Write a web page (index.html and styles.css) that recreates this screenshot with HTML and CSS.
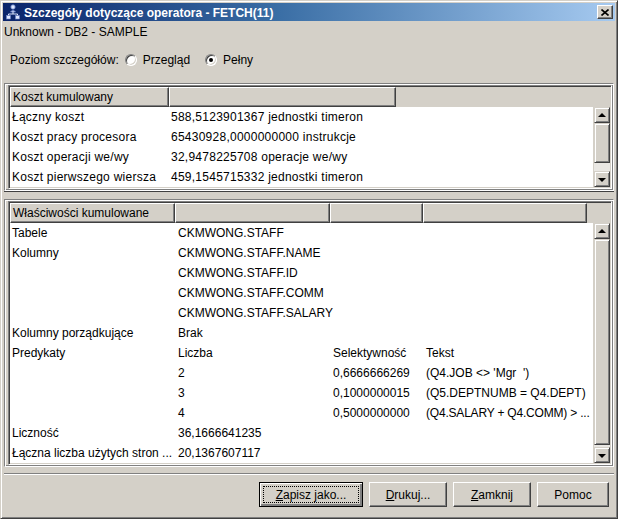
FILE: index.html
```html
<!DOCTYPE html>
<html>
<head>
<meta charset="utf-8">
<link rel="stylesheet" href="styles.css">
</head>
<body>
<div class="window">
  <div class="titlebar">
    <svg class="appicon" width="16" height="16" viewBox="0 0 16 16">
      <circle cx="8" cy="3" r="2.2" fill="#dfe8ff" stroke="#6b83c8" stroke-width="0.8"/>
      <path d="M5.5 8 Q8 4.5 10.5 8 Z" fill="#dfe8ff" stroke="#6b83c8" stroke-width="0.8"/>
      <path d="M8 8 V10 M3.5 10 H12.5 M3.5 10 V11.5 M12.5 10 V11.5" stroke="#dfe8ff" stroke-width="1" fill="none"/>
      <rect x="1.5" y="11.5" width="4" height="3.5" fill="#dfe8ff" stroke="#6b83c8" stroke-width="0.6"/>
      <rect x="10.5" y="11.5" width="4" height="3.5" fill="#dfe8ff" stroke="#6b83c8" stroke-width="0.6"/>
    </svg>
    <span class="title">Szczegóły dotyczące operatora - FETCH(11)</span>
    <div class="close">
      <svg width="8" height="7" viewBox="0 0 8 7"><path d="M0.5 0.5 L7.5 6.5 M7.5 0.5 L0.5 6.5" stroke="#000" stroke-width="1.6" fill="none"/></svg>
    </div>
  </div>

  <div class="conn">Unknown - DB2 - SAMPLE</div>

  <div class="level">
    <span class="level-label">Poziom szczegółów:</span>
    <span class="rb"></span><span class="rb-text">Przegląd</span>
    <span class="rb checked"></span><span class="rb-text">Pełny</span>
  </div>

  <div class="panel upper">
    <div class="scrollpane">
      <div class="thead cols-up">
        <div class="th">Koszt kumulowany</div>
        <div class="th"></div>
      </div>
      <div class="tbody">
        <div class="tr cols-up"><span>Łączny koszt</span><span>588,5123901367 jednostki timeron</span></div>
        <div class="tr cols-up"><span>Koszt pracy procesora</span><span>65430928,0000000000 instrukcje</span></div>
        <div class="tr cols-up"><span>Koszt operacji we/wy</span><span>32,9478225708 operacje we/wy</span></div>
        <div class="tr cols-up"><span>Koszt pierwszego wiersza</span><span>459,1545715332 jednostki timeron</span></div>
      </div>
      <div class="vscroll">
        <div class="sbtn"><span class="arr-up"></span></div>
        <div class="thumb short"></div>
        <div class="track"></div>
        <div class="sbtn"><span class="arr-down"></span></div>
      </div>
    </div>
  </div>

  <div class="splitter"></div>

  <div class="panel lower">
    <div class="scrollpane">
      <div class="thead cols-low">
        <div class="th">Właściwości kumulowane</div>
        <div class="th"></div>
        <div class="th"></div>
        <div class="th"></div>
      </div>
      <div class="tbody">
        <div class="tr cols-low"><span>Tabele</span><span>CKMWONG.STAFF</span><span></span><span></span></div>
        <div class="tr cols-low"><span>Kolumny</span><span>CKMWONG.STAFF.NAME</span><span></span><span></span></div>
        <div class="tr cols-low"><span></span><span>CKMWONG.STAFF.ID</span><span></span><span></span></div>
        <div class="tr cols-low"><span></span><span>CKMWONG.STAFF.COMM</span><span></span><span></span></div>
        <div class="tr cols-low"><span></span><span>CKMWONG.STAFF.SALARY</span><span></span><span></span></div>
        <div class="tr cols-low"><span>Kolumny porządkujące</span><span>Brak</span><span></span><span></span></div>
        <div class="tr cols-low"><span>Predykaty</span><span>Liczba</span><span>Selektywność</span><span>Tekst</span></div>
        <div class="tr cols-low"><span></span><span>2</span><span>0,6666666269</span><span>(Q4.JOB &lt;&gt; 'Mgr&nbsp;&nbsp;')</span></div>
        <div class="tr cols-low"><span></span><span>3</span><span>0,1000000015</span><span>(Q5.DEPTNUMB = Q4.DEPT)</span></div>
        <div class="tr cols-low"><span></span><span>4</span><span>0,5000000000</span><span class="tight">(Q4.SALARY + Q4.COMM) &gt; ...</span></div>
        <div class="tr cols-low"><span>Liczność</span><span>36,1666641235</span><span></span><span></span></div>
        <div class="tr cols-low"><span>Łączna liczba użytych stron ...</span><span>20,1367607117</span><span></span><span></span></div>
      </div>
      <div class="vscroll">
        <div class="sbtn"><span class="arr-up"></span></div>
        <div class="thumb long"></div>
        <div class="track"></div>
        <div class="sbtn"><span class="arr-down"></span></div>
      </div>
    </div>
  </div>

  <div class="separator"></div>

  <div class="buttons">
    <button class="btn default w-save"><span class="focus"><u>Z</u>apisz jako...</span></button>
    <button class="btn w-print"><u>D</u>rukuj...</button>
    <button class="btn w-close"><u>Z</u>amknij</button>
    <button class="btn w-help">Pomoc</button>
  </div>
</div>
</body>
</html>
```

FILE: styles.css
```css
* { box-sizing: border-box; }

html, body {
  margin: 0;
  padding: 0;
  background: #D4D0C8;
}

body {
  font-family: "Liberation Sans", Arial, sans-serif;
  font-size: 12px;
  color: #000;
}

.window {
  width: 618px;
  height: 519px;
  background: #D4D0C8;
  border: 1px solid;
  border-color: #D4D0C8 #404040 #404040 #D4D0C8;
  box-shadow: inset 1px 1px 0 #fff, inset -1px -1px 0 #808080;
  padding: 2px;
  display: flex;
  flex-direction: column;
}

.titlebar {
  height: 18px;
  background: linear-gradient(to right, #0A246A 0%, #3A6EA5 45%, #A6CAF0 100%);
  display: flex;
  align-items: center;
  padding-left: 2px;
  padding-right: 2px;
  flex: none;
}

.appicon { flex: none; margin-right: 3px; }

.title {
  color: #fff;
  font-weight: bold;
  font-size: 12px;
  font-family: "Liberation Sans", Arial, sans-serif;
  flex: 1;
  white-space: nowrap;
  padding-top: 1px;
}

.close {
  width: 16px;
  height: 14px;
  background: #D4D0C8;
  border: 1px solid;
  border-color: #fff #404040 #404040 #fff;
  box-shadow: inset -1px -1px 0 #808080;
  display: flex;
  align-items: center;
  justify-content: center;
  flex: none;
}

.conn {
  margin-top: 3px;
  line-height: 16px;
  padding-left: 1px;
}

.level {
  margin-top: 11px;
  height: 18px;
  display: flex;
  align-items: center;
  padding-left: 7px;
}

.level-label { margin-right: 6px; }

.rb {
  width: 12px;
  height: 12px;
  border-radius: 50%;
  background: #fff;
  border: 1px solid;
  border-color: #808080 #fff #fff #808080;
  box-shadow: inset 1px 1px 0 #404040, inset -1px -1px 0 #D4D0C8;
  position: relative;
  flex: none;
}

.rb.checked::after {
  content: "";
  position: absolute;
  left: 3px;
  top: 3px;
  width: 4px;
  height: 4px;
  border-radius: 50%;
  background: #000;
}

.rb-text { margin-left: 6px; margin-right: 15px; }

.panel {
  margin: 0 1px;
  border: 1px solid;
  border-color: #808080 #fff #fff #808080;
  box-shadow: inset 1px 1px 0 #fff, inset -1px -1px 0 #808080;
  padding: 1px 1px 1px 3px;
  flex: none;
}

.upper { margin-top: 14px; }

.splitter {
  height: 8px;
  margin: 0 1px;
  border-top: 1px solid #404040;
  flex: none;
}

.scrollpane {
  border: 1px solid;
  border-color: #808080 #fff #fff #808080;
  box-shadow: inset 1px 1px 0 #404040, inset -1px -1px 0 #D4D0C8;
  padding: 1px;
  display: grid;
  grid-template-columns: 1fr 16px;
  grid-template-rows: 20px auto;
  column-gap: 1px;
  background: #D4D0C8;
}

.thead {
  grid-column: 1 / -1;
  display: grid;
  height: 20px;
}

.th {
  border: 1px solid;
  border-color: #fff #404040 #404040 #fff;
  box-shadow: inset -1px -1px 0 #808080;
  padding-left: 2px;
  line-height: 18px;
  white-space: nowrap;
  overflow: hidden;
}

.cols-up { grid-template-columns: 159px 227px 1fr; }
.thead.cols-up { grid-template-columns: 159px 227px; }

.cols-low { grid-template-columns: 165px 155px 93px 1fr; }
.thead.cols-low { grid-template-columns: 165px 155px 93px 164px; }

.tbody {
  background: #fff;
  overflow: hidden;
}

.upper .tbody { height: 80px; letter-spacing: 0.25px; }
.lower .tbody { height: 240px; }

.tr {
  display: grid;
  height: 20px;
  line-height: 20px;
}

.tr span {
  white-space: nowrap;
  padding-left: 2px;
}

.cols-low span:nth-child(n+2) { padding-left: 3px; }
.tr span.tight { letter-spacing: -0.2px; }

.vscroll {
  display: flex;
  flex-direction: column;
  background: #E9E7E3;
}

.sbtn, .thumb {
  background: #D4D0C8;
  border: 1px solid;
  border-color: #D4D0C8 #404040 #404040 #D4D0C8;
  box-shadow: inset 1px 1px 0 #fff, inset -1px -1px 0 #808080;
  flex: none;
}

.sbtn {
  height: 16px;
  display: flex;
  align-items: center;
  justify-content: center;
}

.thumb.short { height: 40px; }
.thumb.long { height: 206px; }
.track { flex: 1; }

.arr-up, .arr-down {
  width: 0;
  height: 0;
  border-left: 4px solid transparent;
  border-right: 4px solid transparent;
}
.arr-up { border-bottom: 4px solid #000; margin-top: -1px; }
.arr-down { border-top: 4px solid #000; margin-top: 1px; }

.separator {
  margin: 6px 1px 0 1px;
  height: 2px;
  border-top: 1px solid #808080;
  border-bottom: 1px solid #fff;
  flex: none;
}

.buttons {
  margin-top: 7px;
  display: flex;
  justify-content: flex-end;
  gap: 6px;
  padding-right: 6px;
}

.btn {
  height: 25px;
  font-family: "Liberation Sans", Arial, sans-serif;
  font-size: 12px;
  color: #000;
  background: #D4D0C8;
  border: 1px solid;
  border-color: #fff #404040 #404040 #fff;
  box-shadow: inset -1px -1px 0 #808080;
  padding: 0;
  display: flex;
  align-items: center;
  justify-content: center;
  white-space: nowrap;
}

.btn.default {
  border-color: #000;
  box-shadow: inset 1px 1px 0 #fff, inset -2px -2px 0 #808080;
  padding: 3px;
}

.focus {
  flex: 1;
  align-self: stretch;
  border: 1px dotted #000;
  display: flex;
  align-items: center;
  justify-content: center;
}

.w-save { width: 104px; }
.w-print { width: 78px; }
.w-close { width: 78px; }
.w-help { width: 72px; }
```
